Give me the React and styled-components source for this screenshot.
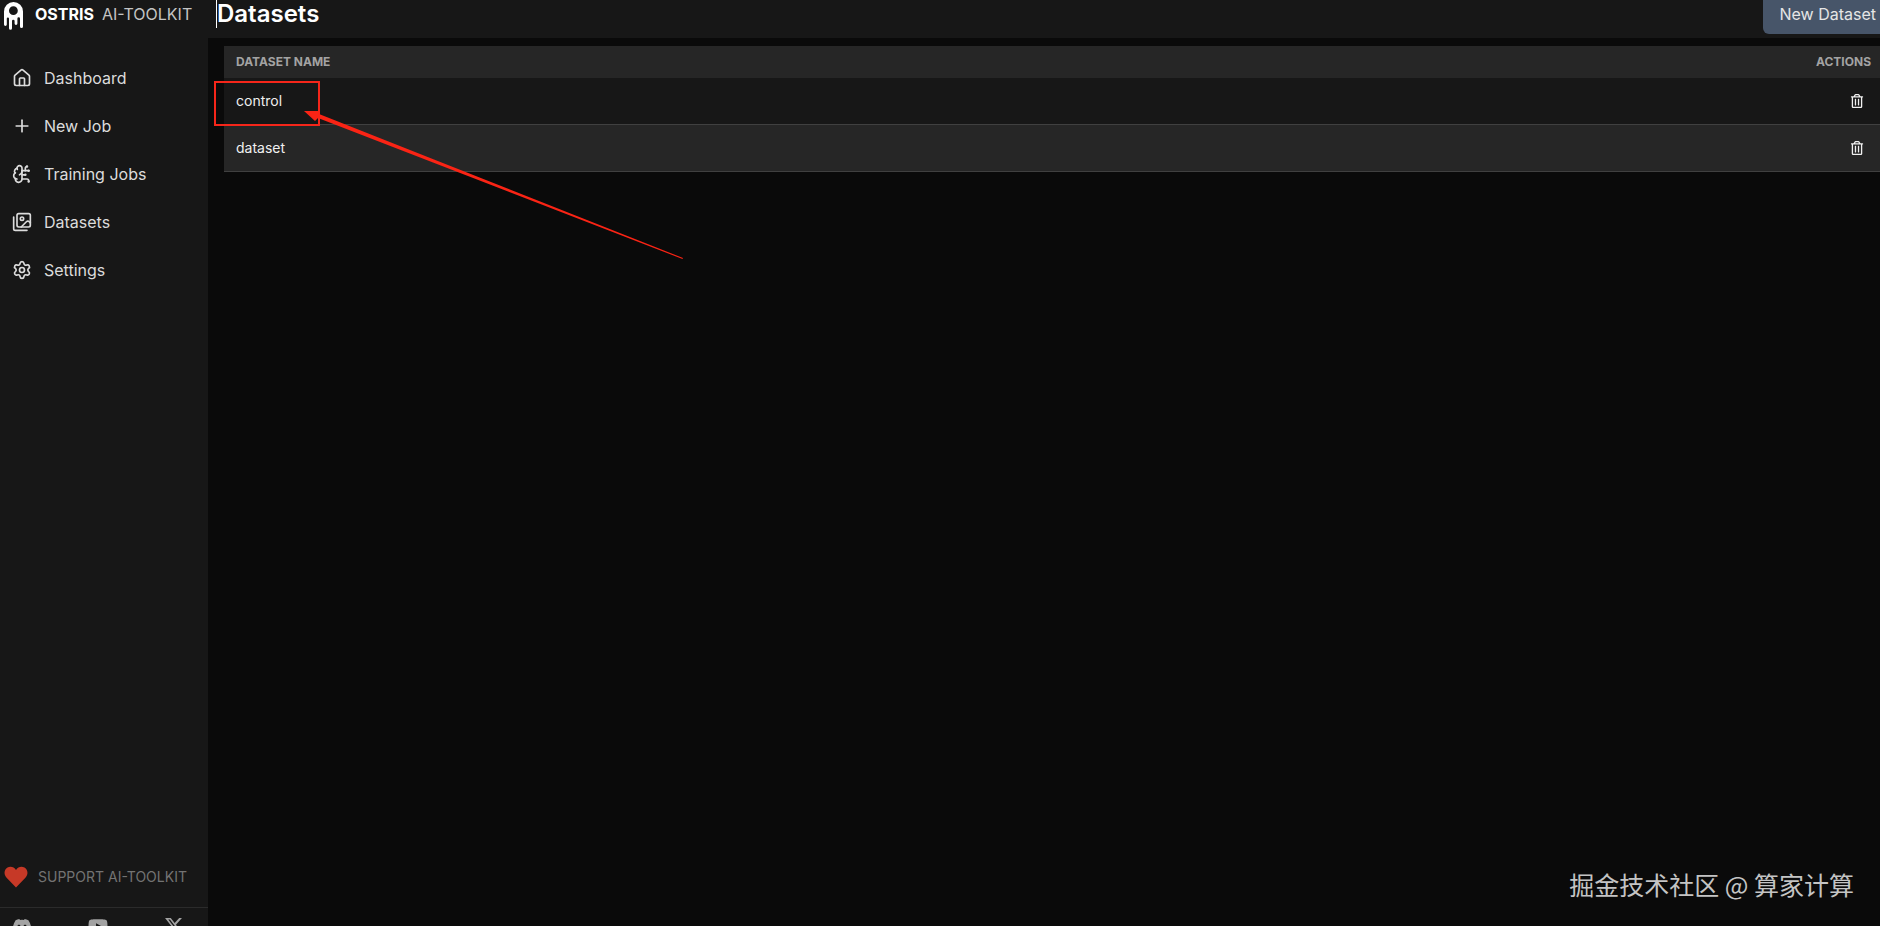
import React, { useState } from "react";
import styled, { createGlobalStyle } from "styled-components";
import { BrainCircuit, House, Plus, Settings } from "lucide-react";
import { FaDiscord, FaRegTrashAlt, FaYoutube } from "react-icons/fa";
import { FaXTwitter } from "react-icons/fa6";

const ImagesIcon = () => (
  <svg
    viewBox="0 0 24 24"
    fill="none"
    stroke="currentColor"
    strokeWidth="2"
    strokeLinecap="round"
    strokeLinejoin="round"
  >
    <path d="M18 22H4a2 2 0 0 1-2-2V6" />
    <path d="m22 13-1.296-1.296a2.41 2.41 0 0 0-3.408 0L11 18" />
    <circle cx="12" cy="8" r="2" />
    <rect width="16" height="16" x="6" y="2" rx="2" />
  </svg>
);

const menus = [
  { name: "Dashboard", path: "#dashboard", icon: House },
  { name: "New Job", path: "#new-job", icon: Plus },
  { name: "Training Jobs", path: "#jobs", icon: BrainCircuit },
  { name: "Datasets", path: "#datasets", icon: ImagesIcon },
  { name: "Settings", path: "#settings", icon: Settings },
];

const socials = [
  { name: "Discord", icon: FaDiscord },
  { name: "YouTube", icon: FaYoutube },
  { name: "X", icon: FaXTwitter },
];

const Sidebar = () => (
  <SidebarContainer>
    <Brand>
      <Logo viewBox="0 0 20 29" aria-hidden="true">
        <path
          fillRule="evenodd"
          d="M0 10.500a9.500 9.500 0 0 1 19 0V25.500a1.500 1.500 0 0 1-3 0V17.500a1.300 1.300 0 0 0-2.600 0V22.500a1.400 1.400 0 0 1-2.800 0V20a1.300 1.300 0 0 0-2.600 0V27.200a1.500 1.500 0 0 1-3 0V17.500a1.100 1.100 0 0 0-2.200 0V23.500a1.400 1.400 0 0 1-2.800 0ZM9.400 5.300a4.400 4.400 0 1 0 0 8.800a4.400 4.400 0 1 0 0-8.800Z"
        />
      </Logo>
      <BrandName>
        <strong>OSTRIS</strong>
        <span>AI-TOOLKIT</span>
      </BrandName>
    </Brand>
    <Nav>
      {menus.map(({ name, path, icon: Icon }) => (
        <NavLink href={path} key={name}>
          <Icon />
          {name}
        </NavLink>
      ))}
    </Nav>
    <Support href="#support">
      <svg viewBox="0 0 24 24" aria-hidden="true">
        <path d="M12 22.500 2.600 12.800C-.6 9.400.1 4.600 3.500 2.600 6.500.9 10 1.900 12 5c2-3.100 5.500-4.100 8.500-2.400 3.400 2 4.100 6.800.9 10.200Z" />
      </svg>
      SUPPORT AI-TOOLKIT
    </Support>
    <Socials>
      {socials.map(({ name, icon: Icon }) => (
        <a href={"#" + name.toLowerCase()} aria-label={name} key={name}>
          <Icon />
        </a>
      ))}
    </Socials>
  </SidebarContainer>
);

const App = () => {
  const [datasets, setDatasets] = useState(["control", "dataset"]);

  const handleDelete = (name) => {
    setDatasets(datasets.filter((d) => d !== name));
  };

  return (
    <>
      <GlobalStyle />
      <Layout>
        <Sidebar />
        <Main>
          <TopBar>
            <Title>Datasets</Title>
            <NewButton type="button">New Dataset</NewButton>
          </TopBar>
          <Content>
            <Table>
              <thead>
                <tr>
                  <th scope="col">Dataset Name</th>
                  <th scope="col">Actions</th>
                </tr>
              </thead>
              <tbody>
                {datasets.map((name) => (
                  <tr key={name}>
                    <td>
                      <a href={"#datasets/" + name}>{name}</a>
                    </td>
                    <td>
                      <DeleteButton
                        type="button"
                        aria-label={"Delete " + name}
                        onClick={() => handleDelete(name)}
                      >
                        <FaRegTrashAlt />
                      </DeleteButton>
                    </td>
                  </tr>
                ))}
              </tbody>
            </Table>
            <Highlight />
            <Arrow viewBox="0 0 380 150" aria-hidden="true">
              <path d="M0 1 16 1 15 4 130 49.500 379 148 378.500 149 129 52.500 14 8 11 11Z" />
            </Arrow>
          </Content>
        </Main>
        <Watermark>掘金技术社区 @ 算家计算</Watermark>
      </Layout>
    </>
  );
};

const GlobalStyle = createGlobalStyle`
  * {
    box-sizing: border-box;
  }
  body {
    margin: 0;
    background: #0a0a0a;
    color: #e5e5e5;
    font-family: Inter, "Liberation Sans", sans-serif;
    font-size: 16px;
    line-height: 24px;
  }
  a {
    color: inherit;
    text-decoration: none;
  }
`;

const Layout = styled.div`
  display: flex;
  height: 100vh;
  overflow: hidden;
`;

const SidebarContainer = styled.aside`
  display: flex;
  flex-direction: column;
  flex: none;
  width: 208px;
  background: #171717;
`;

const Brand = styled.div`
  display: flex;
  align-items: center;
  gap: 11px;
  height: 30px;
  padding-left: 4px;
`;

const Logo = styled.svg`
  width: 20px;
  height: 29px;
  fill: #ffffff;
`;

const BrandName = styled.div`
  display: flex;
  gap: 8px;
  padding-bottom: 2px;
  color: #c4c4c4;
  strong {
    color: #ffffff;
    font-weight: 700;
  }
`;

const Nav = styled.nav`
  display: flex;
  flex-direction: column;
  flex: 1;
  gap: 8px;
  padding-top: 28px;
`;

const NavLink = styled.a`
  display: flex;
  align-items: center;
  gap: 12px;
  height: 40px;
  padding: 0 12px;
  color: #dcdcdc;
  svg {
    width: 20px;
    height: 20px;
  }
  &:hover {
    background: #262626;
  }
`;

const Support = styled.a`
  display: flex;
  align-items: center;
  gap: 10px;
  height: 62px;
  padding-left: 4px;
  border-bottom: 1px solid #2b2b2b;
  color: #737373;
  font-size: 14px;
  svg {
    width: 24px;
    height: 24px;
    fill: #c63927;
  }
`;

const Socials = styled.div`
  display: flex;
  justify-content: space-between;
  height: 18px;
  padding: 8px 24px 0 12px;
  overflow: hidden;
  color: #a3a3a3;
  font-size: 20px;
  a {
    display: block;
    height: 20px;
  }
  svg {
    display: block;
  }
`;

const Main = styled.main`
  display: flex;
  flex-direction: column;
  flex: 1;
  min-width: 0;
`;

const TopBar = styled.header`
  display: flex;
  align-items: flex-start;
  justify-content: space-between;
  height: 38px;
  padding-left: 8px;
  background: #171717;
`;

const Title = styled.h1`
  margin: 0;
  border-left: 1px solid #ffffff;
  color: #ffffff;
  font-size: 24px;
  font-weight: 600;
  line-height: 28px;
`;

const NewButton = styled.button`
  padding: 0 4px 6px 16px;
  border: none;
  border-radius: 0 0 0 6px;
  background: #475569;
  color: #e5e5e5;
  font: inherit;
  line-height: 28px;
  cursor: pointer;
`;

const Content = styled.section`
  position: relative;
  padding: 8px 0 0 16px;
`;

const Table = styled.table`
  width: 100%;
  border-collapse: collapse;
  font-size: 14px;
  line-height: 22px;
  th {
    padding: 8px 12px;
    background: #262626;
    color: #a3a3a3;
    font-size: 12px;
    font-weight: 700;
    line-height: 16px;
    text-align: left;
    text-transform: uppercase;
  }
  td {
    padding: 12px;
    border-bottom: 1px solid #404040;
    background: #171717;
    color: #f0f0f0;
  }
  tbody tr:nth-child(even) td {
    background: #262626;
  }
  th:last-child {
    padding-right: 9px;
    text-align: right;
  }
  td:last-child {
    padding-right: 16px;
    text-align: right;
  }
`;

const DeleteButton = styled.button`
  padding: 0 0 2px;
  border: none;
  background: none;
  color: #f0f0f0;
  font-size: 14px;
  line-height: 14px;
  vertical-align: middle;
  cursor: pointer;
  svg {
    display: block;
  }
`;

/* annotations drawn over the table */
const Highlight = styled.div`
  position: absolute;
  top: 43px;
  left: 6px;
  width: 106px;
  height: 45px;
  border: 2px solid #f5261a;
  pointer-events: none;
`;

const Arrow = styled.svg`
  position: absolute;
  top: 72px;
  left: 96px;
  width: 380px;
  height: 150px;
  fill: #fa2415;
  pointer-events: none;
`;

const Watermark = styled.div`
  position: absolute;
  right: 26px;
  bottom: 24px;
  color: #c4c4c4;
  font-family: "Noto Sans CJK SC", sans-serif;
  font-size: 25px;
  line-height: 36px;
`;

export default App;
